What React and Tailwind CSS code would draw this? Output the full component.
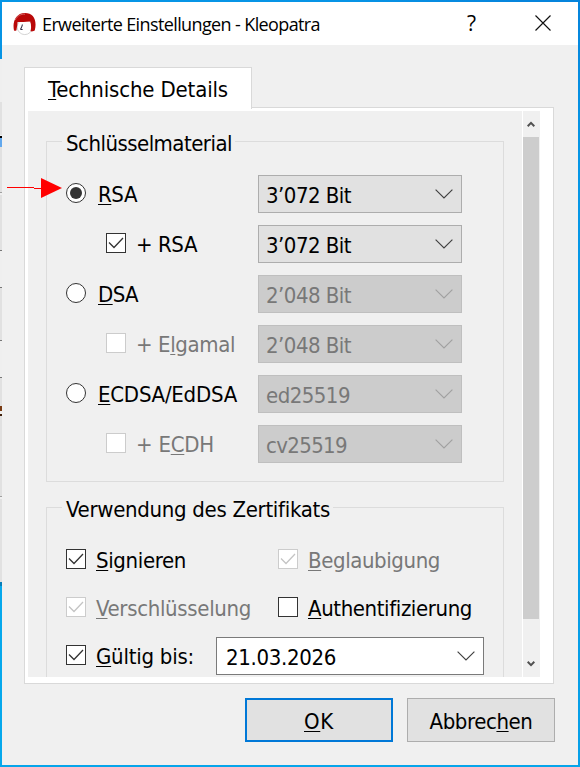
import { useLayoutEffect, useRef } from "react";

const UI = "font-['DejaVu_Sans_Condensed','Noto_Sans',sans-serif] text-[22px] leading-[30px]";

/* Text whose tracking is set so that it fills the given width.
   An ampersand marks the accelerator letter that follows it. */
function Label({ text, width, className = "" }) {
  const ref = useRef(null);
  const at = text.indexOf("&");
  const plain = text.replace("&", "");
  useLayoutEffect(() => {
    const el = ref.current;
    el.style.letterSpacing = "0px";
    const natural = el.getBoundingClientRect().width;
    el.style.letterSpacing = `${(width - natural) / plain.length}px`;
  }, [width, plain]);
  return (
    <span ref={ref} className={`inline-block whitespace-pre ${className}`}>
      {at < 0 ? (
        plain
      ) : (
        <>
          {plain.slice(0, at)}
          <span className="underline decoration-1 underline-offset-[2px] [text-decoration-skip-ink:none]">{plain[at]}</span>
          {plain.slice(at + 1)}
        </>
      )}
    </span>
  );
}

function Chevron({ className = "" }) {
  return (
    <svg width="18" height="10" viewBox="0 0 18 10" className={className} fill="none" stroke="currentColor" strokeWidth="1.15">
      <path d="M0.6 0.6 9 9 17.4 0.6" />
    </svg>
  );
}

function Check({ checked, disabled }) {
  return (
    <span className={`flex size-5 shrink-0 items-center justify-center border bg-white ${disabled ? "border-[#cccccc] text-[#c4c4c4]" : "border-[#333333] text-[#333333]"}`}>
      {checked && (
        <svg width="16" height="12" viewBox="0 0 16 12" fill="none" stroke="currentColor" strokeWidth="1.3">
          <path d="M1 5.5 6 10.5 15 1" />
        </svg>
      )}
    </span>
  );
}

function Radio({ on }) {
  return (
    <span className="flex size-5 shrink-0 items-center justify-center rounded-full border border-[#333333] bg-white">
      {on && <span className="size-3 rounded-full bg-[#333333]" />}
    </span>
  );
}

function Combo({ text, width, disabled }) {
  return (
    <div className={`flex h-[38px] w-[204px] items-center justify-between border pr-2 pl-[7px] ${disabled ? "border-[#bfbfbf] bg-[#cccccc] text-[#787878]" : "border-[#adadad] bg-[#e1e1e1] text-black"}`}>
      <Label text={text} width={width} className="relative top-0.5" />
      <Chevron className={disabled ? "text-[#a0a0a0]" : "text-[#404040]"} />
    </div>
  );
}

const rows = [
  { kind: "radio", on: true, label: "&RSA", w: 39, value: "3’072 Bit", vw: 85 },
  { kind: "check", on: true, label: "+ RSA", w: 61, value: "3’072 Bit", vw: 85 },
  { kind: "radio", label: "&DSA", w: 40, value: "2’048 Bit", vw: 85, off: true },
  { kind: "check", label: "+ E&lgamal", w: 99, value: "2’048 Bit", vw: 85, off: true },
  { kind: "radio", label: "&ECDSA/EdDSA", w: 139, value: "ed25519", vw: 84, off: true },
  { kind: "check", label: "+ E&CDH", w: 78, value: "cv25519", vw: 81, off: true },
];

function KeyRow({ row }) {
  const nested = row.kind === "check";
  return (
    <div className="flex h-[38px] justify-between">
      <div className={`flex h-9 items-center ${nested ? "pl-10" : "gap-3"} ${nested && row.off ? "text-[#787878]" : "text-black"}`}>
        {nested ? <Check checked={row.on} disabled={row.off} /> : <Radio on={row.on} />}
        <Label text={row.label} width={row.w} className={`relative top-0.5 ${nested ? "ml-2.5" : ""}`} />
      </div>
      <Combo text={row.value} width={row.vw} disabled={row.off} />
    </div>
  );
}

function Option({ text, width, checked, disabled, className = "" }) {
  return (
    <div className={`flex h-5 items-center gap-2.5 ${disabled ? "text-[#787878]" : "text-black"} ${className}`}>
      <Check checked={checked} disabled={disabled} />
      <Label text={text} width={width} className="relative top-0.5" />
    </div>
  );
}

function Group({ title, width, className, children }) {
  return (
    <section className={`w-[458px] border-[#dcdcdc] ${className}`}>
      <div className="-mt-px flex h-0 items-center">
        <h2 className="ml-[15px] bg-[#f0f0f0] pr-[3px] pl-1">
          <Label text={title} width={width} className="relative top-[3px] align-top" />
        </h2>
      </div>
      {children}
    </section>
  );
}

function Logo() {
  return (
    <svg width="24" height="24" viewBox="0 0 24 24">
      <circle cx="11.8" cy="15" r="7.6" fill="#fff" stroke="#c9c9c9" strokeWidth="0.8" />
      <path d="M1 18.5C-.8 10 2.5 1 12 .9 20.500.9 24.300 8 21.800 18.200 21.300 19.200 18.500 19.800 17.500 19.100 18.400 16 18.200 12.500 17.200 9.600 12.500 10.300 8 9.900 4.600 10 4.500 13.500 3.500 16.500 3.500 18.300 2.500 19 1.800 19 1 18.500Z" fill="#b90808" />
      <path d="M2.300 8C4.500 3.500 8 2 12 2.200" fill="none" stroke="#d96a6a" strokeWidth="0.9" />
      <path d="M9.400 12.500C9.200 14.500 8 16.200 7.400 17.500M7.400 17.500H9.600" fill="none" stroke="#303047" strokeWidth="1.100" />
    </svg>
  );
}

function ScrollArrow({ down }) {
  return (
    <svg width="8" height="7" viewBox="0 0 8 7" className={down ? "rotate-180" : ""} fill="none" stroke="#505050" strokeWidth="2">
      <path d="M0.700 5.200 4 1.900 7.300 5.200" />
    </svg>
  );
}

/* The sliver of the window behind, seen along the left edge. */
function EdgeStrip() {
  return (
    <div className="flex w-0.5 flex-col overflow-hidden">
      <div className="h-[57px] bg-[#0794e4]" />
      <div className="h-[43px] bg-[#efefef]" />
      <div className="h-[33px] bg-[#e1e1e1]" />
      <div className="mt-px h-0.5 bg-black" />
      <div className="h-[9px] bg-[#62a8ed]" />
      <div className="h-[45px] bg-[#e1e1e1]" />
      <div className="h-px bg-[#a0a0a0]" />
      <div className="mt-0.5 h-[55px] bg-[#e1e1e1]" />
      <div className="h-px bg-[#777777]" />
      <div className="h-9 bg-[#efefef]" />
      <div className="h-px bg-[#777777]" />
      <div className="h-[52px] bg-[#e1e1e1]" />
      <div className="h-px bg-[#777777]" />
      <div className="h-9 bg-[#efefef]" />
      <div className="h-px bg-[#777777]" />
      <div className="h-[28px] bg-[#e1e1e1]" />
      <div className="h-[5px] bg-[#7a3c14]" />
      <div className="mt-[3px] h-0.5 bg-[#40200a]" />
      <div className="h-[80px] bg-[#e1e1e1]" />
      <div className="h-px bg-[#a0a0a0]" />
      <div className="mt-0.5 h-[83px] bg-[#e1e1e1]" />
      <div className="h-1 bg-[#067fba]" />
      <div className="flex-1 bg-[#06a8ec]" />
    </div>
  );
}

export default function App() {
  return (
    <div className={`relative flex h-[767px] w-[580px] flex-col overflow-hidden bg-[#f0f0f0] text-black ${UI}`}>
      <div className="h-0.5 shrink-0 bg-[linear-gradient(90deg,#0596e6,#0794e6_60%,#0584dc_90%)]" />
      <div className="flex min-h-0 flex-1">
        <EdgeStrip />
        <main className="flex min-w-0 flex-1 flex-col">
          <header className="flex h-[43px] shrink-0 items-center bg-white pl-[11px] font-['Open_Sans',sans-serif] text-[18px] leading-6">
            <Logo />
            <Label text="Erweiterte Einstellungen - Kleopatra" width={278} className="ml-[5px]" />
            <span className="relative -top-px ml-[147px] font-['Open_Sans',sans-serif] text-[21px]">?</span>
            <svg width="16" height="16" viewBox="0 0 16 16" className="mr-[27px] mb-0.5 ml-auto" stroke="#111" strokeWidth="1.150">
              <path d="M0.500 0.500 15.500 15.500M15.500 0.500 0.500 15.500" />
            </svg>
          </header>

          <div className="px-[22px] pt-[22px]">
            <div className="relative z-10 -mb-0.5 flex h-[42px] w-[228px] items-center border border-b-0 border-[#d9d9d9] bg-white pl-[23px]">
              <Label text="&Technische Details" width={180} className="relative top-[1.5px]" />
            </div>
            <div className="flex h-[577px] w-[530px] border border-[#d9d9d9] bg-white pt-[3px] pl-[3px]">
              <div className="h-[566px] w-[494px] overflow-hidden bg-[#f0f0f0] pt-[30px] pl-[18px]">
                <Group title="Schlüsselmaterial" width={166} className="h-[341px] border">
                  <div className="flex flex-col gap-3 pt-[34px] pr-[41px] pl-[19px]">
                    {rows.map((row, i) => (
                      <KeyRow key={i} row={row} />
                    ))}
                  </div>
                </Group>
                <Group title="Verwendung des Zertifikats" width={264} className="mt-[25px] h-[200px] border">
                  <div className="grid grid-cols-[212px_1fr] gap-y-7 pt-[42px] pl-[19px]">
                    <Option text="&Signieren" width={90} checked />
                    <Option text="&Beglaubigung" width={132} checked disabled />
                    <Option text="&Verschlüsselung" width={155} checked disabled />
                    <Option text="&Authentifizierung" width={164} />
                  </div>
                  <div className="flex pt-5 pl-[19px]">
                    <Option text="&Gültig bis:" width={98} checked className="mt-2 w-[150px]" />
                    <div className="flex h-[38px] w-[268px] items-center justify-between border border-[#7a7a7a] bg-white pr-2 pl-[9px]">
                      <Label text="21.03.2026" width={110} className="relative top-0.5" />
                      <Chevron className="text-[#404040]" />
                    </div>
                  </div>
                </Group>
              </div>
              <div className="ml-px flex h-[566px] w-[17px] flex-col bg-[#f0f0f0]">
                <div className="flex h-[26px] items-center justify-center pr-0.5">
                  <ScrollArrow />
                </div>
                <div className="h-[482px] w-4 bg-[#cdcdcd]" />
                <div className="flex flex-1 items-center justify-center pt-[30px] pr-0.5">
                  <ScrollArrow down />
                </div>
              </div>
            </div>
          </div>

          <footer className="mt-[14px] mr-[23px] flex justify-end gap-[14px]">
            <button className="flex h-11 w-[148px] items-center justify-center border-2 border-[#0078d7] bg-[#e1e1e1]">
              <Label text="&OK" width={30} className="relative top-0.5" />
            </button>
            <button className="flex h-11 w-[148px] items-center justify-center border border-[#adadad] bg-[#e1e1e1]">
              <Label text="Abbrec&hen" width={103} className="relative top-0.5" />
            </button>
          </footer>
        </main>
        <div className="w-0.5 bg-[linear-gradient(180deg,#0584dc,#0596e6_20%,#06a0e8)]" />
      </div>
      <div className="h-0.5 shrink-0 bg-[#06a5ea]" />

      <svg width="56" height="22" viewBox="0 0 56 22" className="absolute top-[177px] left-[7px]">
        <path d="M0 10H27V11H34V12H27V11H0Z" fill="#f00" />
        <path d="M34 1 55 11 34 21Z" fill="#f00" />
      </svg>
    </div>
  );
}
